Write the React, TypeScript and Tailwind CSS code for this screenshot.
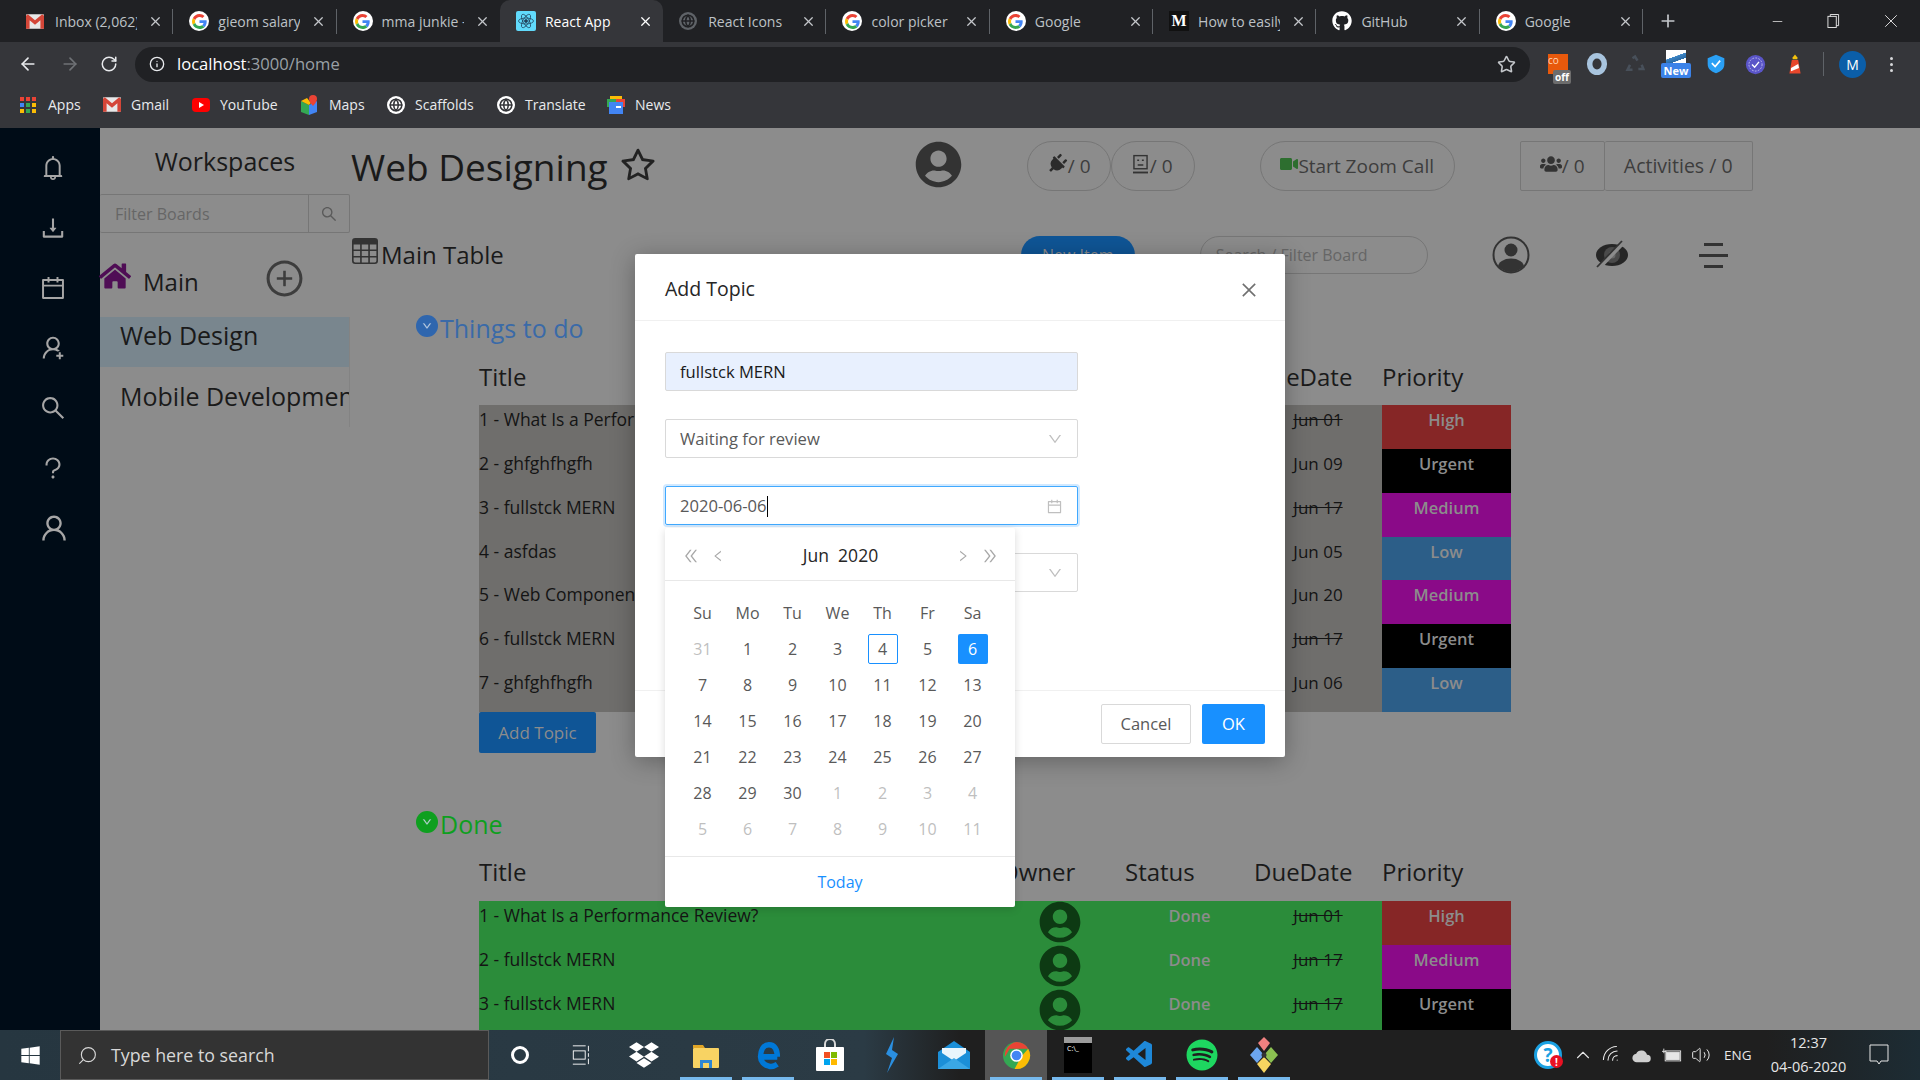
import {
  AiOutlineBell,
  AiOutlineCalendar,
  AiOutlineClose,
  AiOutlineDoubleLeft,
  AiOutlineDoubleRight,
  AiOutlineDown,
  AiOutlineDownload,
  AiOutlineLeft,
  AiOutlinePlusCircle,
  AiOutlineQuestion,
  AiOutlineRight,
  AiOutlineSearch,
  AiOutlineStar,
  AiOutlineUser,
  AiOutlineUserAdd,
} from "react-icons/ai";
import { BsTable } from "react-icons/bs";
import { FaGithub, FaHome, FaPlug, FaSpotify, FaUserCircle, FaUsers, FaVideo, FaWindows, FaDropbox } from "react-icons/fa";
import { VscVscode } from "react-icons/vsc";
import { ArrowLeft, ArrowRight, ChevronUp, Globe, Info, Minus, Plus, RotateCw, Search, Star, Volume2, Wifi, X } from "lucide-react";

function GoogleIcon({ size = 18 }: { size?: number }) {
  return (
    <span className="flex shrink-0 items-center justify-center rounded-full bg-white" style={{ width: size + 2, height: size + 2 }}>
      <svg viewBox="0 0 48 48" width={size - 3} height={size - 3}>
        <path fill="#EA4335" d="M24 9.5c3.54 0 6.71 1.22 9.21 3.6l6.85-6.85C35.9 2.38 30.47 0 24 0 14.62 0 6.51 5.38 2.56 13.22l7.98 6.19C12.43 13.72 17.74 9.5 24 9.5z" />
        <path fill="#4285F4" d="M46.98 24.55c0-1.57-.15-3.09-.38-4.55H24v9.02h12.94c-.58 2.96-2.26 5.48-4.78 7.18l7.73 6c4.51-4.18 7.09-10.36 7.09-17.65z" />
        <path fill="#FBBC05" d="M10.53 28.59c-.48-1.45-.76-2.99-.76-4.59s.27-3.14.76-4.59l-7.98-6.19C.92 16.46 0 20.12 0 24c0 3.88.92 7.54 2.56 10.78l7.97-6.19z" />
        <path fill="#34A853" d="M24 48c6.48 0 11.93-2.13 15.89-5.81l-7.73-6c-2.15 1.45-4.92 2.3-8.16 2.3-6.26 0-11.57-4.22-13.47-9.91l-7.98 6.19C6.51 42.62 14.62 48 24 48z" />
      </svg>
    </span>
  );
}

function GmailIcon() {
  return (
    <svg viewBox="0 0 20 16" width="18" height="15" className="shrink-0">
      <rect width="20" height="16" rx="1" fill="#e8e8e8" />
      <path d="M0 1.5v14.5h4V6.5l6 5 6-5V16h4V1.5L18 0l-8 6.5L2 0z" fill="#d44638" />
    </svg>
  );
}

function ReactIcon() {
  return (
    <span className="flex h-[20px] w-[20px] shrink-0 items-center justify-center rounded-[2px] bg-[#61dafb]">
      <svg viewBox="-12 -12 24 24" width="18" height="18" fill="none" stroke="#20405a" strokeWidth="1">
        <circle r="2" fill="#20405a" />
        <ellipse rx="10" ry="4" />
        <ellipse rx="10" ry="4" transform="rotate(60)" />
        <ellipse rx="10" ry="4" transform="rotate(120)" />
      </svg>
    </span>
  );
}

function GlobeDark({ dim }: { dim?: boolean }) {
  return (
    <span className={`flex h-[18px] w-[18px] shrink-0 items-center justify-center rounded-full ${dim ? "bg-[#5f6368]" : "bg-white"}`}>
      <Globe size={14} strokeWidth={2.6} className={dim ? "text-[#202124]" : "text-[#35363a]"} />
    </span>
  );
}

const tabs = [
  { title: "Inbox (2,062)", icon: <GmailIcon /> },
  { title: "gieom salary", icon: <GoogleIcon /> },
  { title: "mma junkie -", icon: <GoogleIcon /> },
  { title: "React App", icon: <ReactIcon />, active: true },
  { title: "React Icons", icon: <GlobeDark dim /> },
  { title: "color picker", icon: <GoogleIcon /> },
  { title: "Google", icon: <GoogleIcon /> },
  {
    title: "How to easily",
    icon: <span className="flex h-[20px] w-[20px] shrink-0 items-center justify-center bg-[#111] font-['Liberation_Serif',serif] text-[16px] font-bold text-white">M</span>,
  },
  { title: "GitHub", icon: <FaGithub size={20} className="shrink-0 text-white" /> },
  { title: "Google", icon: <GoogleIcon /> },
];

function TabStrip() {
  return (
    <div className="flex h-[42px] items-stretch bg-[#202124] pl-[10px] text-[14px] text-[#bdc1c6]">
      {tabs.map((tab, i) => {
        const nextActive = tabs[i + 1]?.active;
        return (
          <div key={i} className={`relative flex w-[163.3px] shrink-0 items-center pl-[16px] ${tab.active ? "rounded-t-[10px] bg-[#35363a] text-white" : ""}`}>
            <span className="flex w-[29px] shrink-0 items-center">{tab.icon}</span>
            <span className="w-[82px] overflow-hidden whitespace-nowrap">{tab.title}</span>
            <X size={15} className={`ml-[11px] shrink-0 ${tab.active ? "text-white" : "text-[#c4c7cb]"}`} />
            {!tab.active && !nextActive && <span className="absolute right-0 top-[9px] h-[25px] w-px bg-[#5f6368]" />}
          </div>
        );
      })}
      <Plus size={20} className="ml-[15px] self-center text-[#c4c7cb]" />
      <div className="ml-auto flex items-center text-[#e8e8e8]">
        <Minus size={15} strokeWidth={1.2} className="mr-[42px]" />
        <svg viewBox="0 0 14 16" width="13" height="16" fill="none" stroke="currentColor" className="mr-[40px]">
          <rect x="1" y="3" width="9" height="12" />
          <path d="M3.5 3V1h9v12h-2.5" />
        </svg>
        <X size={22} strokeWidth={1} className="mr-[18px]" />
      </div>
    </div>
  );
}

function ExtensionIcons() {
  return (
    <div className="flex items-center">
      <span className="relative mr-[18px] block h-[20px] w-[20px] bg-[#e8590c] text-[10px] leading-[12px] text-[#ffd7b8]">
        co
        <span className="absolute -bottom-[10px] left-[5px] rounded-[2px] bg-[#6d6d6d] px-[2px] text-[10px] font-bold leading-[14px] text-white">off</span>
      </span>
      <svg viewBox="0 0 24 24" width="22" height="24" className="mr-[17px]">
        <ellipse cx="12" cy="12" rx="8" ry="9" fill="none" stroke="#a8c4de" strokeWidth="6" />
      </svg>
      <svg viewBox="0 0 24 24" width="20" height="20" className="mr-[16px]" fill="none" stroke="#48505a" strokeWidth="3">
        <path d="M9 5l3-2 3 5M20 13l2 5h-6M9 19H3l3-6" />
      </svg>
      <span className="relative mr-[15px] block h-[28px] w-[30px]">
        <span className="absolute left-[5px] top-0 block h-[14px] w-[20px] bg-[linear-gradient(160deg,#fff_45%,#3d86c6_46%,#2a6aa5_70%,#fff_71%)]" />
        <span className="absolute bottom-0 left-0 w-[30px] rounded-[2px] bg-[#3b82e8] text-center text-[11px] font-bold leading-[15px] text-white">New</span>
      </span>
      <svg viewBox="0 0 24 24" width="20" height="24" className="mr-[19px]">
        <path d="M12 1l10 4v7c0 6-4 9-10 11C6 21 2 18 2 12V5z" fill="#2aa0f5" />
        <path d="M7 11l4 4 6-7" fill="none" stroke="#fff" strokeWidth="2" />
      </svg>
      <svg viewBox="0 0 24 24" width="21" height="21" className="mr-[21px]">
        <circle cx="12" cy="12" r="11" fill="#5a55c8" />
        <circle cx="12" cy="12" r="7.5" fill="none" stroke="#c8c6f4" strokeDasharray="2 1.5" />
        <path d="M8 12l3 3 5-6" fill="none" stroke="#fff" strokeWidth="1.6" />
      </svg>
      <svg viewBox="0 0 20 26" width="16" height="22">
        <path d="M10 1l3 4v2H7V5z" fill="#f4c20d" />
        <path d="M6 8h8l3 17H3z" fill="#e8472c" />
        <path d="M5 18l9-5 1 5-10 4z" fill="#fff" />
      </svg>
      <span className="ml-[20px] h-[24px] w-px bg-[#5f6368]" />
      <span className="ml-[15px] flex h-[27px] w-[27px] items-center justify-center rounded-full bg-[#0b5ea8] text-[14px] text-white">M</span>
      <span className="ml-[24px] flex w-[4px] flex-col gap-[3px]">
        <i className="h-[3px] w-[3px] rounded-full bg-[#d7d8da]" />
        <i className="h-[3px] w-[3px] rounded-full bg-[#d7d8da]" />
        <i className="h-[3px] w-[3px] rounded-full bg-[#d7d8da]" />
      </span>
    </div>
  );
}

function Toolbar() {
  return (
    <div className="flex h-[43px] items-center bg-[#35363a] pl-[18px] pb-[4px] pt-[5px]">
      <ArrowLeft size={20} className="text-[#e8eaed]" />
      <ArrowRight size={20} className="ml-[22px] text-[#6f7276]" />
      <RotateCw size={18} className="ml-[20px] text-[#e8eaed]" />
      <div className="ml-[17px] flex h-[35px] w-[1395px] items-center rounded-full bg-[#202124] pl-[14px] pr-[14px]">
        <Info size={16} className="text-[#e8eaed]" />
        <span className="ml-[12px] text-[16.6px] text-white">
          localhost<span className="text-[#9aa0a6]">:3000/home</span>
        </span>
        <Star size={19} className="ml-auto mr-[0px] text-[#c4c7cb]" />
      </div>
      <div className="ml-[18px]">
        <ExtensionIcons />
      </div>
    </div>
  );
}

function AppsGrid() {
  const colors = ["#ea4335", "#ea4335", "#ea4335", "#4285f4", "#34a853", "#fbbc05", "#fbbc05", "#34a853", "#fbbc05"];
  return (
    <span className="grid h-[16px] w-[16px] grid-cols-3 gap-[2px]">
      {colors.map((c, i) => (
        <i key={i} className="block" style={{ background: c }} />
      ))}
    </span>
  );
}

const bookmarks = [
  { label: "Apps", icon: <AppsGrid />, width: 83 },
  { label: "Gmail", icon: <GmailIcon />, width: 89 },
  {
    label: "YouTube",
    icon: (
      <span className="flex h-[14px] w-[18px] items-center justify-center rounded-[4px] bg-[#f00]">
        <span className="border-y-[3px] border-l-[5px] border-y-transparent border-l-white" />
      </span>
    ),
    width: 109,
  },
  {
    label: "Maps",
    icon: (
      <svg viewBox="0 0 16 20" width="16" height="20">
        <path d="M0 6l8 4v10l-8-3z" fill="#34a853" />
        <path d="M8 10l8-4v11l-8 3z" fill="#4285f4" />
        <path d="M0 6l6-3 4 5-2 2z" fill="#fbbc05" />
        <path d="M12 0a4 4 0 0 1 4 4c0 3-4 7-4 7s-4-4-4-7a4 4 0 0 1 4-4z" fill="#ea4335" />
      </svg>
    ),
    width: 86,
  },
  { label: "Scaffolds", icon: <GlobeDark />, width: 110 },
  { label: "Translate", icon: <GlobeDark />, width: 110 },
  {
    label: "News",
    icon: (
      <svg viewBox="0 0 18 18" width="18" height="18">
        <rect x="3" y="0" width="12" height="8" fill="#fbbc05" />
        <rect x="0" y="3" width="9" height="8" fill="#34a853" />
        <rect x="9" y="3" width="9" height="8" fill="#ea4335" />
        <rect x="2" y="6" width="14" height="12" fill="#4285f4" />
        <rect x="9" y="10" width="5" height="2" fill="#fff" />
      </svg>
    ),
    width: 70,
  },
];

function BookmarksBar() {
  return (
    <div className="flex h-[43px] items-center bg-[#35363a] pb-[4px] pl-[20px] text-[14px] text-[#e8eaed]">
      {bookmarks.map((b) => (
        <div key={b.label} className="flex shrink-0 items-center" style={{ width: b.width }}>
          <span className="flex w-[28px] shrink-0 items-center">{b.icon}</span>
          <span>{b.label}</span>
        </div>
      ))}
    </div>
  );
}

function IconRail() {
  const icons = [AiOutlineBell, AiOutlineDownload, AiOutlineCalendar, AiOutlineUserAdd, AiOutlineSearch, AiOutlineQuestion];
  return (
    <aside className="flex w-[100px] shrink-0 flex-col items-center bg-[#000c17] pt-[10px] text-[#a6a6a6]">
      {icons.map((Icon, i) => (
        <div key={i} className="flex h-[60px] w-full items-center justify-center pl-[5px]">
          <Icon size={28} />
        </div>
      ))}
      <div className="flex h-[60px] w-full items-center justify-center pl-[8px]">
        <AiOutlineUser size={32} />
      </div>
    </aside>
  );
}

function BoardsColumn() {
  return (
    <div className="w-[250px] shrink-0 text-[#1a1a1a]">
      <div className="flex h-[66px] items-center justify-center pt-[2px] text-[25px]">Workspaces</div>
      <div className="flex h-[39px] items-stretch rounded-[2px] border border-[#767676] border-l-0">
        <div className="flex flex-1 items-center pl-[15px] text-[16px] text-[#666]">Filter Boards</div>
        <div className="flex w-[41px] items-center justify-center border-l border-[#767676]">
          <AiOutlineSearch size={18} className="text-[#5a5a5a]" />
        </div>
      </div>
      <div className="flex h-[84px] items-center pt-[13px]">
        <FaHome size={32} className="-mt-[11px] -ml-[1px] text-[#4f0d55]" />
        <span className="ml-[12px] text-[24px]">Main</span>
        <AiOutlinePlusCircle size={41} className="ml-[65px] -mt-[6px] text-[#3d3d3d]" />
      </div>
      <div className="border-r border-[#838383]">
        <div className="flex h-[50px] items-center bg-[#79868e] pb-[13px] pl-[20px] text-[25px]">Web Design</div>
        <div className="flex h-[60px] items-center overflow-hidden whitespace-nowrap pl-[20px] text-[25px]">Mobile Development</div>
      </div>
    </div>
  );
}

type Priority = "High" | "Urgent" | "Medium" | "Low";
const priorityClass: Record<Priority, string> = {
  High: "bg-[#862626] text-[#8c8c8c]",
  Urgent: "bg-black text-[#8c8c8c]",
  Medium: "bg-[#8a0a88] text-[#8c8c8c]",
  Low: "bg-[#2c5e88] text-[#8c8c8c]",
};

interface Row {
  title: string;
  status: string;
  date: string;
  overdue: boolean;
  priority: Priority;
}

const todo: Row[] = [
  { title: "1 - What Is a Performance Review?", status: "Stuck", date: "Jun 01", overdue: true, priority: "High" },
  { title: "2 - ghfghfhgfh", status: "Waiting", date: "Jun 09", overdue: false, priority: "Urgent" },
  { title: "3 - fullstck MERN", status: "Stuck", date: "Jun 17", overdue: true, priority: "Medium" },
  { title: "4 - asfdas", status: "Working", date: "Jun 05", overdue: false, priority: "Low" },
  { title: "5 - Web Components", status: "Stuck", date: "Jun 20", overdue: false, priority: "Medium" },
  { title: "6 - fullstck MERN", status: "Waiting", date: "Jun 17", overdue: true, priority: "Urgent" },
  { title: "7 - ghfghfhgfh", status: "Working", date: "Jun 06", overdue: false, priority: "Low" },
];

const done: Row[] = [
  { title: "1 - What Is a Performance Review?", status: "Done", date: "Jun 01", overdue: true, priority: "High" },
  { title: "2 - fullstck MERN", status: "Done", date: "Jun 17", overdue: true, priority: "Medium" },
  { title: "3 - fullstck MERN", status: "Done", date: "Jun 17", overdue: true, priority: "Urgent" },
];

const tableCols = "grid grid-cols-[521px_125px_129px_128px_129px]";

function BoardTable({ rows, rowBg, ownerClass }: { rows: Row[]; rowBg: string; ownerClass: string }) {
  return (
    <div className="ml-[129px] w-[1032px]">
      <div className={`${tableCols} h-[55px] items-center pb-[2px] text-[24px] text-[#1a1a1a]`}>
        <span>Title</span>
        <span>Owner</span>
        <span>Status</span>
        <span>DueDate</span>
        <span>Priority</span>
      </div>
      {rows.map((row, i) => (
        <div key={i} className={`${tableCols} h-[43.85px] text-[17px] leading-[29px] ${rowBg}`}>
          <span className="whitespace-nowrap text-[17.5px] text-[#141414]">{row.title}</span>
          <span className="flex justify-center pr-[5px]">
            <FaUserCircle size={42} className={ownerClass} />
          </span>
          <span className="text-center text-[16.5px] font-semibold text-[#8c8c8c]">{row.status}</span>
          <span className={`text-center text-[#141414] ${row.overdue ? "line-through" : ""}`}>{row.date}</span>
          <span className={`text-center text-[16.5px] font-semibold ${priorityClass[row.priority]}`}>{row.priority}</span>
        </div>
      ))}
    </div>
  );
}

function SectionTitle({ label, color, bg }: { label: string; color: string; bg: string }) {
  return (
    <div className={`ml-[66px] flex h-[30px] items-center text-[25px] ${color}`}>
      <span className={`-mt-[6px] mr-[2px] flex h-[22px] w-[22px] items-center justify-center rounded-full text-[#c9d6e6] ${bg}`}>
        <AiOutlineDown size={10} strokeWidth={40} />
      </span>
      {label}
    </div>
  );
}

function HeaderActions() {
  return (
    <>
      <FaUserCircle size={47} className="ml-[257px] -mt-[3px] text-[#333]" />
      <div className="ml-[65px] flex h-[50px] w-[84px] items-center justify-center rounded-full border border-[#767676] text-[19px] text-[#3d3d3d]">
        <FaPlug size={20} className="-mt-[4px] mr-[1px] rotate-45 text-[#2b2b2b]" />/ 0
      </div>
      <div className="flex h-[50px] w-[84px] items-center justify-center rounded-full border border-[#767676] text-[19px] text-[#3d3d3d]">
        <svg viewBox="0 0 16 22" width="15" height="22" fill="none" stroke="#333" strokeWidth="1.5" className="-mt-[3px]">
          <rect x="1" y="1" width="14" height="14" />
          <path d="M4.5 6h2M9.5 6h2M5 11h6" />
          <path d="M0 19h16" strokeWidth="2" />
        </svg>
        <span className="ml-[2px]">/ 0</span>
      </div>
      <div className="ml-[65px] flex h-[50px] w-[195px] items-center justify-center rounded-full border border-[#767676] text-[19px] text-[#3d3d3d]">
        <FaVideo size={18} className="-mt-[4px] text-[#2d6e2f]" />
        Start Zoom Call
      </div>
      <div className="ml-[65px] flex h-[50px] w-[85px] items-center justify-center rounded-[2px] border border-[#767676] text-[19px] text-[#3d3d3d]">
        <FaUsers size={22} className="-mt-[4px] text-[#333]" />/ 0
      </div>
      <div className="flex h-[50px] w-[148px] items-center justify-center rounded-[2px] border border-l-0 border-[#767676] text-[19.5px] text-[#3d3d3d]">Activities / 0</div>
    </>
  );
}

function TableToolbar() {
  return (
    <div className="mt-[32px] flex h-[38px] items-center text-[#1a1a1a]">
      <BsTable size={26} className="ml-[2px] -mt-[8px] text-[#333]" />
      <span className="ml-[3px] text-[24px]">Main Table</span>
      <div className="ml-[517px] flex h-[38px] w-[114px] items-center justify-center rounded-full bg-[#0f5596] text-[16px] text-[#8c8c8c]">New Item</div>
      <div className="ml-[65px] flex h-[38px] w-[228px] items-center rounded-full border border-[#767676] pl-[15px] text-[16px] text-[#666]">Search / Filter Board</div>
      <svg viewBox="0 0 38 38" width="38" height="38" className="ml-[64px]">
        <defs>
          <clipPath id="ring-clip">
            <circle cx="19" cy="19" r="17" />
          </clipPath>
        </defs>
        <circle cx="19" cy="19" r="17.5" fill="none" stroke="#333" strokeWidth="2" />
        <circle cx="19" cy="14" r="6.5" fill="#333" />
        <ellipse cx="19" cy="31" rx="13" ry="8.5" fill="#333" clipPath="url(#ring-clip)" />
      </svg>
      <svg viewBox="0 0 34 30" width="34" height="30" className="ml-[65px]">
        <ellipse cx="17" cy="15" rx="16" ry="11" fill="#262626" />
        <circle cx="17" cy="15" r="8" fill="#4a4a4a" />
        <circle cx="17" cy="15" r="3.5" fill="#6a6a6a" />
        <path d="M4 28L29 2" stroke="#8c8c8c" strokeWidth="4" />
        <path d="M2 27L27 1" stroke="#333" strokeWidth="1.8" />
      </svg>
      <span className="ml-[70px] flex w-[29px] flex-col items-center gap-[8px]">
        <i className="block h-[3px] w-[19px] bg-[#333]" />
        <i className="block h-[3px] w-[29px] bg-[#333]" />
        <i className="block h-[3px] w-[19px] bg-[#333]" />
      </span>
    </div>
  );
}

function Board() {
  return (
    <main className="min-w-0 flex-1 overflow-hidden">
      <div className="flex h-[76px] items-center">
        <h1 className="ml-[1px] mt-[1px] text-[37px] leading-none text-[#1a1a1a]">Web Designing</h1>
        <AiOutlineStar size={40} className="ml-[10px] -mt-[1px] text-[#222]" />
        <HeaderActions />
      </div>
      <TableToolbar />
      <div className="mt-[40px]">
        <SectionTitle label="Things to do" color="text-[#3a6aa8]" bg="bg-[#2f66ae]" />
      </div>
      <div className="mt-[6px]">
        <BoardTable rows={todo} rowBg="bg-[#6f6e6c]" ownerClass="text-[#333]" />
      </div>
      <button className="ml-[129px] h-[41px] w-[117px] rounded-[2px] bg-[#0f5596] text-[17px] text-[#8c8c8c]">Add Topic</button>
      <div className="mt-[57px]">
        <SectionTitle label="Done" color="text-[#0e9f1f]" bg="bg-[#0e9f1f]" />
      </div>
      <div className="mt-[6px]">
        <BoardTable rows={done} rowBg="bg-[#2b8c3a]" ownerClass="text-[#0d3a13]" />
      </div>
    </main>
  );
}

const weekdays = ["Su", "Mo", "Tu", "We", "Th", "Fr", "Sa"];
const dates: { d: number; muted?: boolean }[] = [
  { d: 31, muted: true },
  ...Array.from({ length: 30 }, (_, i) => ({ d: i + 1 })),
  ...Array.from({ length: 11 }, (_, i) => ({ d: i + 1, muted: true })),
];

function DatePopup() {
  return (
    <div className="absolute left-[30px] top-[207px] w-[350px] rounded-[2px] bg-white text-[16px] text-[#595959] shadow-[0_2px_8px_rgba(0,0,0,0.15)]">
      <div className="flex h-[53px] items-center border-b border-[#e8e8e8] pl-[17px] pr-[16px] pt-[3px] text-[#a8a8a8]">
        <AiOutlineDoubleLeft size={18} />
        <AiOutlineLeft size={14} className="ml-[11px]" />
        <span className="flex-1 text-center text-[17.5px] font-medium text-[#262626]">Jun&nbsp;&nbsp;2020</span>
        <AiOutlineRight size={14} />
        <AiOutlineDoubleRight size={18} className="ml-[11px]" />
      </div>
      <div className="grid grid-cols-[repeat(7,45px)] grid-rows-[36px] auto-rows-[36px] px-[15px] pt-[14px] pb-[9px]">
        {weekdays.map((w) => (
          <span key={w} className="flex items-center justify-center">
            {w}
          </span>
        ))}
        {dates.map((c, i) => {
          const today = !c.muted && c.d === 4;
          const selected = !c.muted && c.d === 6;
          return (
            <span key={i} className="flex items-center justify-center">
              <span
                className={`flex h-[30px] w-[30px] items-center justify-center rounded-[2px] ${
                  selected ? "bg-[#1890ff] text-white" : today ? "border border-[#1890ff]" : c.muted ? "text-[#bfbfbf]" : ""
                }`}
              >
                {c.d}
              </span>
            </span>
          );
        })}
      </div>
      <div className="flex h-[51px] items-center justify-center border-t border-[#e8e8e8] text-[#1890ff]">Today</div>
    </div>
  );
}

function AddTopicModal() {
  const box = "flex h-[39px] w-[413px] items-center rounded-[2px] border pl-[14px] pt-[1px] text-[16.6px]";
  return (
    <div className="absolute left-[635px] top-[126px] w-[650px] rounded-[2px] bg-white shadow-[0_4px_24px_rgba(0,0,0,0.3)]">
      <div className="relative flex h-[67px] items-center border-b border-[#f0f0f0] pl-[30px] pt-[3px] text-[19.5px] font-medium text-[#262626]">
        Add Topic
        <AiOutlineClose size={20} className="absolute right-[26px] top-[26px] text-[#707070]" />
      </div>
      <div className="relative flex flex-col gap-[28px] pl-[30px] pt-[31px] pb-[98px]">
        <div className={`${box} border-[#d9d9d9] bg-[#e8f0fe] text-[#1a1a1a]`}>fullstck MERN</div>
        <div className={`${box} border-[#d9d9d9] text-[#595959]`}>
          Waiting for review
          <AiOutlineDown size={16} className="ml-auto mr-[14px] text-[#bfbfbf]" />
        </div>
        <div className={`${box} border-[#40a9ff] text-[#595959] shadow-[0_0_0_2px_rgba(24,144,255,0.2)]`}>
          2020-06-06
          <span className="h-[21px] w-px bg-black" />
          <AiOutlineCalendar size={17} className="ml-auto mr-[14px] text-[#bfbfbf]" />
        </div>
        <div className={`${box} border-[#d9d9d9] text-[#595959]`}>
          <AiOutlineDown size={16} className="ml-auto mr-[14px] text-[#bfbfbf]" />
        </div>
        <DatePopup />
      </div>
      <div className="flex h-[67px] items-center justify-end gap-[11px] border-t border-[#f0f0f0] pr-[20px] text-[16.5px]">
        <button className="h-[40px] w-[90px] rounded-[2px] border border-[#d9d9d9] text-[#595959]">Cancel</button>
        <button className="h-[40px] w-[63px] rounded-[2px] bg-[#1890ff] text-white">OK</button>
      </div>
    </div>
  );
}

function FolderIcon() {
  return (
    <svg viewBox="0 0 28 28" width="28" height="28">
      <path d="M1 4h10l2 3h-12z" fill="#e0a526" />
      <rect x="1" y="7" width="26" height="20" rx="1" fill="#f8d363" />
      <path d="M8 27v-8h12v8h-3v-5h-6v5z" fill="#2e86d4" />
    </svg>
  );
}

function EdgeIcon() {
  return (
    <svg viewBox="0 0 28 30" width="26" height="30" fill="none" stroke="#0078d7" strokeWidth="6">
      <path d="M24 17H6M6 17c0-7 3-13 9-13 6 0 9 5 9 13M24 25c-3 2-6 3-9 2-5-1-9-5-9-10" />
    </svg>
  );
}

function StoreIcon() {
  return (
    <svg viewBox="0 0 28 32" width="28" height="32">
      <path d="M9 8V5a5 5 0 0 1 10 0v3" fill="none" stroke="#d8d8d8" strokeWidth="2" />
      <rect y="8" width="28" height="24" rx="1" fill="#fff" />
      <rect x="8" y="13" width="6" height="6" fill="#f25022" />
      <rect x="15" y="13" width="6" height="6" fill="#7fba00" />
      <rect x="8" y="20" width="6" height="6" fill="#00a4ef" />
      <rect x="15" y="20" width="6" height="6" fill="#ffb900" />
    </svg>
  );
}

function MailIcon() {
  return (
    <svg viewBox="0 0 32 28" width="32" height="28">
      <path d="M0 11L16 0l16 11v17H0z" fill="#1b8fd8" />
      <path d="M0 11l16 10 16-10-16 10z" fill="#8fd0f5" />
      <path d="M4 12V7h24v5l-12 8z" fill="#e9f5fc" />
      <path d="M0 28l16-11 16 11z" fill="#3aa7e6" />
    </svg>
  );
}

function ChromeIcon() {
  return (
    <svg viewBox="-15 -15 30 30" width="29" height="29">
      <circle r="14" fill="#34a853" />
      <path d="M0-14a14 14 0 0 1 12.1 7L0-7H-7l-5 8.5A14 14 0 0 1 0-14z" fill="#ea4335" />
      <path d="M12.1-7A14 14 0 0 1-2 13.9L5 1z" fill="#fbbc05" />
      <circle r="6.5" fill="#fff" />
      <circle r="5" fill="#4285f4" />
    </svg>
  );
}

function KrakenIcon() {
  return (
    <svg viewBox="0 0 28 36" width="28" height="36">
      <path d="M14 0l6 6-6 8-6-8z" fill="#f08080" />
      <path d="M7 10l7 8-7 8-7-8z" fill="#6ca6f0" />
      <path d="M21 10l7 8-7 8-7-8z" fill="#8cc152" />
      <path d="M14 20l7 7-7 9-7-9z" fill="#f7d560" />
      <circle cx="14" cy="18" r="2.5" fill="#333" />
    </svg>
  );
}

const apps = [
  { key: "cortana", icon: <span className="block h-[18px] w-[18px] rounded-full border-[3px] border-white" /> },
  {
    key: "taskview",
    icon: (
      <svg viewBox="0 0 24 24" width="22" height="24" fill="none" stroke="#fff">
        <path d="M2 2h14M2 22h14M19 2v6M22 2v0M19 10v4M19 16v6" />
        <rect x="2.5" y="7.5" width="13" height="9" />
      </svg>
    ),
  },
  { key: "dropbox", icon: <FaDropbox size={30} className="text-white" /> },
  { key: "files", icon: <FolderIcon />, open: true },
  { key: "edge", icon: <EdgeIcon />, open: true },
  { key: "store", icon: <StoreIcon /> },
  {
    key: "sketch",
    icon: (
      <svg viewBox="0 0 16 36" width="16" height="36">
        <path d="M10 0L2 17l6 4-5 15L14 17 8 13z" fill="#2a8fe0" />
      </svg>
    ),
  },
  { key: "mail", icon: <MailIcon /> },
  { key: "chrome", icon: <ChromeIcon />, open: true, active: true },
  {
    key: "terminal",
    icon: (
      <span className="block h-[36px] w-[28px] border-t-[6px] border-[#9b9b9b] bg-black pl-[3px] pt-[2px] text-[7px] leading-none text-white">C:\_</span>
    ),
    open: true,
  },
  { key: "vscode", icon: <VscVscode size={32} className="text-[#1e88d8]" />, open: true },
  { key: "spotify", icon: <FaSpotify size={32} className="text-[#1ed760]" />, open: true },
  { key: "kraken", icon: <KrakenIcon />, open: true },
];

function Taskbar() {
  return (
    <footer className="flex h-[50px] shrink-0 items-center bg-[linear-gradient(90deg,#263640_0%,#2b3b45_45%,#1f1f1f_50%,#1f1f1f_92%,#1d2c34_100%)] text-white">
      <div className="flex w-[60px] justify-center">
        <FaWindows size={21} />
      </div>
      <div className="flex h-full w-[429px] items-center border border-[#5a5a5a] bg-[#333] pl-[16px] text-[17.8px] text-[#d8d8d8]">
        <Search size={21} strokeWidth={1.3} className="-scale-x-100" />
        <span className="ml-[13px]">Type here to search</span>
      </div>
      <div className="flex h-full">
        {apps.map((a) => (
          <div key={a.key} className={`relative flex h-full w-[62px] items-center justify-center ${a.active ? "bg-[#555]" : ""}`}>
            {a.icon}
            {a.open && <span className="absolute bottom-0 left-[5px] right-[5px] h-[3px] bg-[#76b9ed]" />}
          </div>
        ))}
      </div>
      <div className="ml-[239px] flex h-full items-center text-[#e6e6e6]">
        <span className="relative flex h-[28px] w-[28px] items-center justify-center rounded-full border-[3px] border-[#1ba1e2] bg-white text-[19px] font-bold leading-none text-[#1ba1e2]">
          ?<span className="absolute -bottom-[2px] -right-[4px] flex h-[13px] w-[13px] items-center justify-center rounded-full bg-[#e81123] text-[10px] text-white">!</span>
        </span>
        <ChevronUp size={22} strokeWidth={1.2} className="ml-[10px]" />
        <Wifi size={22} strokeWidth={1.2} className="ml-[7px] -rotate-45" />
        <svg viewBox="0 0 24 16" width="20" height="15" className="ml-[9px]" fill="#cfcfcf">
          <path d="M6 16a5 5 0 0 1-1-10 7 7 0 0 1 13 1 4.5 4.5 0 0 1 0 9z" />
        </svg>
        <svg viewBox="0 0 22 16" width="20" height="16" className="ml-[10px]" fill="none" stroke="#e6e6e6">
          <rect x="3.5" y="3.5" width="17" height="11" />
          <rect x="5" y="5" width="14" height="8" fill="#e6e6e6" />
          <path d="M0 4h5M2 1v5" />
        </svg>
        <Volume2 size={20} strokeWidth={1.2} className="ml-[9px]" />
        <span className="ml-[13px] text-[13.5px]">ENG</span>
        <div className="ml-[19px] flex w-[76px] flex-col items-center text-[14.5px] leading-[24px]">
          <span>12:37</span>
          <span>04-06-2020</span>
        </div>
        <svg viewBox="0 0 20 22" width="20" height="22" className="ml-[23px]" fill="none" stroke="#e6e6e6">
          <path d="M1 1h18v16h-7l-2 3-2-3H1z" />
        </svg>
      </div>
    </footer>
  );
}

export default function App() {
  return (
    <div className="flex h-screen w-[1920px] flex-col overflow-hidden font-['Open_Sans','Liberation_Sans',sans-serif]">
      <TabStrip />
      <Toolbar />
      <BookmarksBar />
      <div className="relative flex min-h-0 flex-1 overflow-hidden bg-[#8c8c8c]">
        <IconRail />
        <BoardsColumn />
        <Board />
        <AddTopicModal />
      </div>
      <Taskbar />
    </div>
  );
}
